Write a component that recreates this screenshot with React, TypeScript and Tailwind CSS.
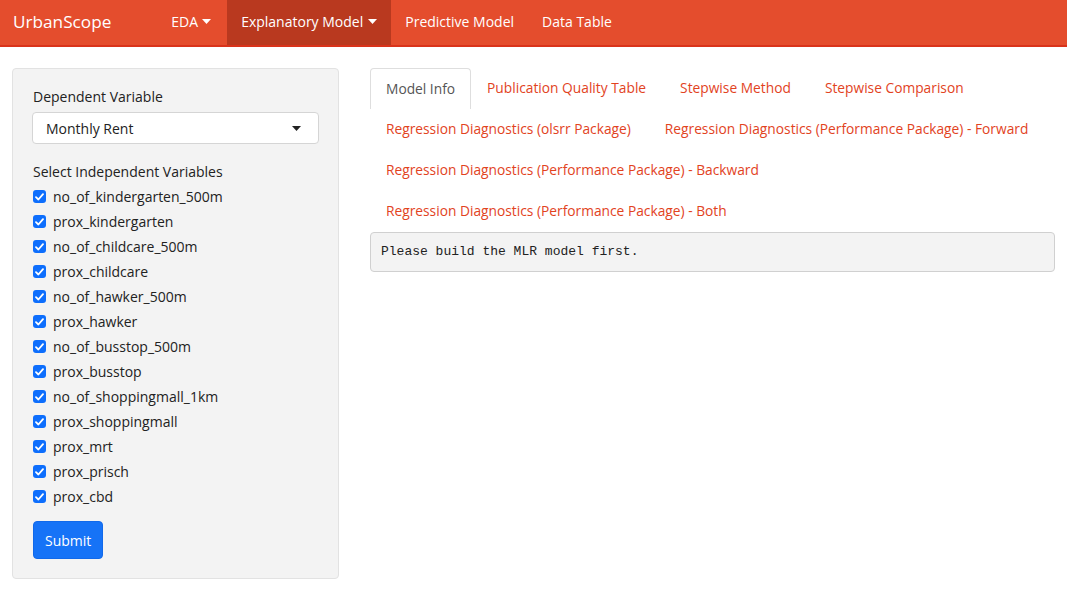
import React, { useState } from 'react';

const variables = [
  'no_of_kindergarten_500m',
  'prox_kindergarten',
  'no_of_childcare_500m',
  'prox_childcare',
  'no_of_hawker_500m',
  'prox_hawker',
  'no_of_busstop_500m',
  'prox_busstop',
  'no_of_shoppingmall_1km',
  'prox_shoppingmall',
  'prox_mrt',
  'prox_prisch',
  'prox_cbd',
];

const tabs = [
  'Model Info',
  'Publication Quality Table',
  'Stepwise Method',
  'Stepwise Comparison',
  'Regression Diagnostics (olsrr Package)',
  'Regression Diagnostics (Performance Package) - Forward',
  'Regression Diagnostics (Performance Package) - Backward',
  'Regression Diagnostics (Performance Package) - Both',
];

const Caret = ({ className = '' }: { className?: string }) => (
  <svg className={className} width="9" height="5" viewBox="0 0 9 5">
    <path d="M0 0 L9 0 L4.5 5 Z" fill="currentColor" />
  </svg>
);

const Check = () => (
  <span className="w-[13px] h-[13px] rounded-[3px] bg-[#0d6efd] flex items-center justify-center shrink-0">
    <svg width="9" height="8" viewBox="0 0 9 8">
      <path d="M1 4.2 L3.4 6.5 L8 1.2" stroke="white" strokeWidth="1.8" fill="none" strokeLinecap="round" strokeLinejoin="round" />
    </svg>
  </span>
);

export default function App() {
  const [active, setActive] = useState(0);
  const [checked, setChecked] = useState<string[]>(variables);

  const toggle = (v: string) =>
    setChecked((c) => (c.includes(v) ? c.filter((x) => x !== v) : [...c, v]));

  return (
    <div className="w-[1067px] h-[589px] bg-white overflow-hidden font-['Open_Sans',sans-serif] text-[#333]">
      {/* Navbar */}
      <nav className="h-[47px] bg-[#e44d2d] border-b-2 border-[#d9331b] flex items-stretch text-white">
        <div className="pl-[13px] pr-[46px] pb-[2px] flex items-center text-[17.2px] leading-none">UrbanScope</div>
        <div className="px-[14px] pb-[2px] flex items-center gap-[4px] text-[14px]">
          EDA <Caret />
        </div>
        <div className="ml-[2px] px-[14px] pb-[2px] flex items-center gap-[5px] text-[14px] bg-[#b9391f]">
          Explanatory Model <Caret />
        </div>
        <div className="px-[14px] pb-[2px] flex items-center text-[14px]">Predictive Model</div>
        <div className="px-[14px] pb-[2px] flex items-center text-[14px]">Data Table</div>
      </nav>

      <div className="flex px-3 pt-[21px] gap-[31px]">
        {/* Sidebar */}
        <aside className="w-[327px] h-[511px] shrink-0 bg-[#f3f3f3] border border-[#e2e2e2] rounded-[4px] pl-[20px] pr-[19px] pt-[17px] text-[14px]">
          <div className="h-[20px] flex items-center text-[#222]">Dependent Variable</div>
          <div className="mt-[6px] -ml-[1px] h-[32px] bg-white border border-[#d5d5d5] rounded-[4px] flex items-center justify-between pl-[13px] pr-[17px] text-[#222]">
            <span>Monthly Rent</span>
            <Caret className="text-[#222]" />
          </div>
          <div className="mt-[17px] h-[20px] flex items-center text-[#222]">Select Independent Variables</div>
          <div className="mt-[3px] flex flex-col">
            {variables.map((v) => (
              <label key={v} onClick={() => toggle(v)} className="h-[25px] flex items-center gap-[7px] text-[#222] cursor-pointer">
                {checked.includes(v) ? <Check /> : <span className="w-[13px] h-[13px] rounded-[3px] border border-[#999] bg-white" />}
                <span>{v}</span>
              </label>
            ))}
          </div>
          <button className="mt-[12px] h-[38px] px-[11px] bg-[#1673f7] rounded-[4px] text-white text-[14px] border border-[#1169ea]">
            Submit
          </button>
        </aside>

        {/* Main */}
        <main className="flex-1">
          <ul className="flex flex-wrap text-[13.78px]">
            {tabs.map((t, i) => (
              <li
                key={t}
                onClick={() => setActive(i)}
                className={
                  i === active
                    ? 'h-[41px] px-[15px] flex items-center border border-b-0 border-[#dedede] rounded-t-[4px] text-[#555] cursor-pointer'
                    : 'h-[41px] px-[16px] mr-[2px] flex items-center text-[#e2431e] cursor-pointer'
                }
              >
                {t}
              </li>
            ))}
          </ul>
          <pre className="h-[40px] border border-[#d0d0d0] bg-[#f3f3f3] rounded-[4px] px-[10px] flex items-center font-['Liberation_Mono',monospace] text-[13px] text-[#222]">
            Please build the MLR model first.
          </pre>
        </main>
      </div>
    </div>
  );
}
